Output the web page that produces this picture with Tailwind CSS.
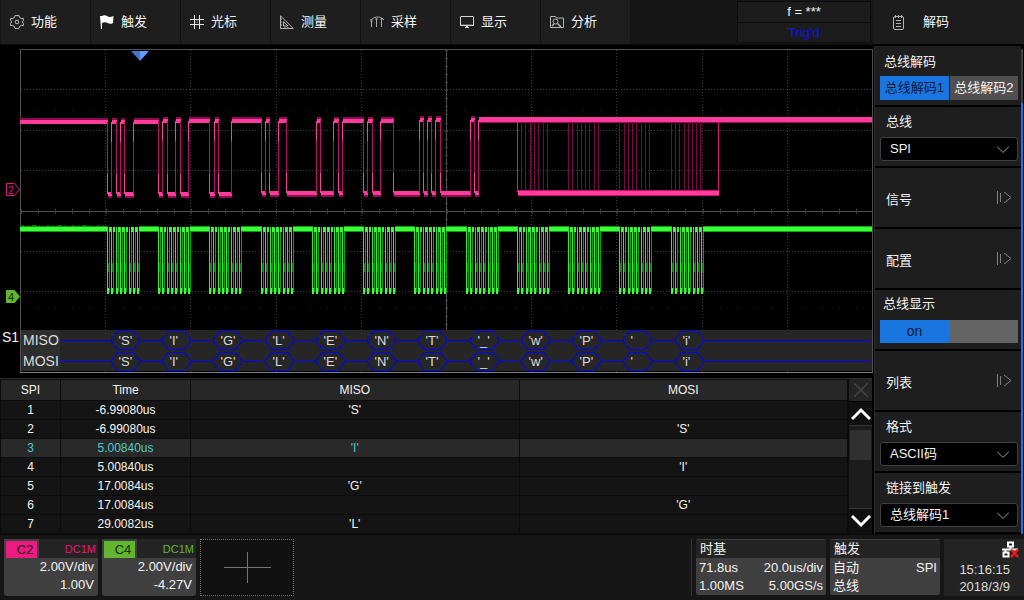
<!DOCTYPE html>
<html lang="zh-CN">
<head>
<meta charset="utf-8">
<title>解码</title>
<script src="https://cdn.jsdelivr.net/npm/@tailwindcss/browser@4"></script>
</head>
<body class="flex min-h-screen flex-col bg-[#161616] font-['Liberation_Sans','Noto_Sans_CJK_SC',sans-serif] text-[13px] leading-[18px] text-[#f4f4f4]">
<div class="flex flex-1 bg-black">
  <main class="flex min-w-0 flex-1 flex-col">
    <header class="flex h-[45px] items-stretch border-b border-[#0c0c0c] bg-[#161616] pl-px">
      <nav class="flex">
        <button class="flex w-[90px] items-center gap-[7px] border-r border-[#121212] bg-[#1e1e1e] pl-[9px]">
          <svg class="size-[14px]" viewBox="0 0 14 14" fill="none" stroke="#c0c0c0"><path d="M5 .6h4l.8 2.200 1.600.8 2-.2v2.200L12.200 7l1.200 1.400v2.200l-2-.2-1.600.8L9 13.400H5l-.8-2.200-1.600-.8-2 .2V8.400L1.800 7 .6 5.600V3.400l2 .2 1.600-.8z"/><circle cx="7" cy="7" r="1.800"/></svg>功能</button>
        <button class="flex w-[90px] items-center gap-[7px] border-r border-[#121212] bg-[#1e1e1e] pl-[9px]">
          <svg class="size-[14px]" viewBox="0 0 14 14" fill="#fff"><path d="M0 1h2v13H1zM2 1c2-1.500 4-.7 5.500.3S11 2 13.500 1L13 8c-2 1.200-4 1-5.500 0S4 7 2 8z"/></svg>触发</button>
        <button class="flex w-[90px] items-center gap-[7px] border-r border-[#121212] bg-[#1e1e1e] pl-[9px]">
          <svg class="size-[14px]" viewBox="0 0 14 14" fill="none" stroke="#e4e4e4"><path d="M4.500 0v14M9.500 0v14M0 4.500h14M0 9.500h14"/><path d="M7 5v4M5 7h4" stroke="#777" stroke-dasharray="1"/></svg>光标</button>
        <button class="flex w-[90px] items-center gap-[7px] border-r border-[#121212] bg-[#1e1e1e] pl-[9px]">
          <svg class="size-[14px]" viewBox="0 0 14 14" fill="none" stroke="#b4b4b4"><path d="M.5.8v12.700h12.800zM3.500 6.500v4.500h4.500z"/><path d="M1 4h1M1 7h1M1 10h1M5 12v1M8 12v1"/></svg>测量</button>
        <button class="flex w-[90px] items-center gap-[7px] border-r border-[#121212] bg-[#1e1e1e] pl-[9px]">
          <svg class="size-[14px]" viewBox="0 0 14 14" fill="none" stroke="#a8a8a8"><path d="M1.500 12V6M6.500 12V4M11.500 12V4"/><path d="M0 5c3 0 3-3 6.500-3S11 2 14 5"/><path d="M.5 6h2M5.500 4h2M10.500 4h2" stroke-width="1.600"/></svg>采样</button>
        <button class="flex w-[90px] items-center gap-[7px] border-r border-[#121212] bg-[#1e1e1e] pl-[9px]">
          <svg class="size-[14px]" viewBox="0 0 14 14" fill="none" stroke="#d4d4d4"><rect x=".5" y="1.500" width="13" height="9" rx=".5"/><path d="M0 10.200h14M6 11.500h2M5 12.500h4"/></svg>显示</button>
        <button class="flex w-[90px] items-center gap-[7px] border-r border-[#121212] bg-[#1e1e1e] pl-[9px]">
          <svg class="size-[14px]" viewBox="0 0 14 14" fill="none" stroke="#b4b4b4"><path d="M.5 12.500v-11h5l1 1.500h7v9.500z"/><circle cx="5.500" cy="6.500" r="2.500"/><path d="M7.500 8.500l3.500 3.500M2 11l2-2" stroke-width="1.500"/></svg>分析</button>
      </nav>
      <div class="mt-px mr-[3px] mb-px ml-auto flex w-[134px] flex-col divide-y divide-[#0c0c0c] border border-[#0c0c0c] bg-[#1c1c1c] text-center">
        <div class="flex-1 leading-5">f = ***</div>
        <div class="flex-1 leading-5 text-[#1010e8]">Trig'd</div>
      </div>
    </header>

    <svg id="scope" class="block h-auto w-full" viewBox="0 45 874 333" role="img" aria-label="SPI">
      <rect y="45" width="874" height="333" fill="#000"/>
      <g id="grid" fill="none" stroke="#3c3c3c" shape-rendering="crispEdges"></g>
      <g id="wave" fill="none" shape-rendering="crispEdges"></g>
      <path d="M131 51h9v10z" fill="#4472c4"/><path d="M140 51h9l-9 10z" fill="#6299fa"/>
      <path d="M6.500 183.500h8l5 6-5 6h-8z" fill="none" stroke="#e5147c"/>
      <path d="M6 290h8.500l5.500 6.500-5.500 6.500H6z" fill="#62b52f"/>
      <text x="8" y="194" font-size="11" fill="#e5147c">2</text>
      <text x="8" y="301" font-size="11" fill="#123000">4</text>
      <g id="decode"></g>
    </svg>

    <section class="mr-[2px] flex flex-1 border-t border-[#2c2c2c] bg-[#141414]">
      <table class="flex-1 table-fixed border-collapse text-center text-[12px]">
        <colgroup><col class="w-[60px]"><col class="w-[130px]"><col><col></colgroup>
        <thead class="bg-[#272727]"><tr class="h-[21px]">
          <th class="border border-[#0c0c0c] p-0 font-normal">SPI</th><th class="border border-[#0c0c0c] p-0 font-normal">Time</th><th class="border border-[#0c0c0c] p-0 font-normal">MISO</th><th class="border border-[#0c0c0c] p-0 font-normal">MOSI</th></tr></thead>
        <tbody id="rows"></tbody>
      </table>
      <div class="flex w-[24px] flex-col border-l border-[#0c0c0c] bg-[#1c1c1c]">
        <button aria-label="关闭" class="flex h-[23px] items-center justify-center border-b border-black bg-[#242424]"><svg class="size-[14px]" viewBox="0 0 14 14" stroke="#484848" stroke-width="1.300"><path d="M0 0l14 14M14 0L0 14"/></svg></button>
        <button aria-label="上" class="flex h-[24px] items-center justify-center border-b border-[#383838] bg-[#101010]"><svg class="h-[14px] w-[20px]" viewBox="0 0 20 14" fill="none" stroke="#fff" stroke-width="3"><path d="M1 12l9-9 9 9"/></svg></button>
        <div class="flex-1 px-px pt-[4px]"><div class="h-[30px] bg-[#303030]"></div></div>
        <button aria-label="下" class="flex h-[26px] items-center justify-center border-t border-[#383838] bg-[#101010]"><svg class="h-[14px] w-[20px]" viewBox="0 0 20 14" fill="none" stroke="#fff" stroke-width="3"><path d="M1 1l9 9 9-9"/></svg></button>
      </div>
    </section>
  </main>

  <aside class="flex w-[150px] flex-col">
    <h1 class="flex h-[44px] items-center gap-[19px] bg-[#1c1c1c] pl-[19px]">
      <svg class="h-[15px] w-[11px]" viewBox="0 0 11 15" fill="none" stroke="#b4b4b4"><rect x=".5" y="1.500" width="10" height="13" rx="1.500"/><path d="M2.500 0v3M5.500 0v3M8.500 0v3M3 5.500h5M3 8.500h5M3 11.500h5"/></svg>解码</h1>
    <div class="mt-[2px] flex flex-1 border-l border-[#2c2c2c]">
      <div class="flex flex-1 flex-col bg-[#1e1e1e]">
        <section class="h-[61px] border-b-2 border-black pt-[7px] pl-[5px]">
          <h2 class="pl-[4px]">总线解码</h2>
          <div class="mt-[5px] mr-[3px] flex h-[24px] gap-px">
            <button class="flex-1 whitespace-nowrap bg-[#1976e0] text-[#0c1c38]">总线解码1</button>
            <button class="flex-1 whitespace-nowrap bg-[#505050]">总线解码2</button>
          </div>
        </section>
        <section class="h-[61px] border-b-2 border-black pt-[6px] pl-[5px]">
          <label for="bus" class="block pl-[6px]">总线</label>
          <div class="relative mt-[6px] mr-[3px]">
            <select id="bus" class="block h-[24px] w-full appearance-none rounded-[3px] border border-[#404040] bg-black pl-[9px]"><option>SPI</option></select>
            <svg class="pointer-events-none absolute top-[9px] right-[9px] h-[7px] w-[12px]" viewBox="0 0 12 7" fill="none" stroke="#a0a0a0"><path d="M0 .5l6 6 6-6"/></svg>
          </div>
        </section>
        <button class="flex h-[61px] items-center justify-between border-b-2 border-black pt-[4px] pr-[9px] pl-[11px]">信号
          <svg class="mb-[4px] h-[13px] w-[16px]" viewBox="0 0 16 13" fill="none" stroke="#808080"><path d="M1.500 0v13M4.500 2v9M8 1l7 5.500L8 12"/></svg></button>
        <button class="flex h-[61px] items-center justify-between border-b-2 border-black pt-[4px] pr-[9px] pl-[11px]">配置
          <svg class="mb-[4px] h-[13px] w-[16px]" viewBox="0 0 16 13" fill="none" stroke="#808080"><path d="M1.500 0v13M4.500 2v9M8 1l7 5.500L8 12"/></svg></button>
        <section class="h-[61px] border-b-2 border-black pt-[5px] pl-[5px]">
          <h2 class="pl-[3px]">总线显示</h2>
          <button role="switch" aria-checked="true" aria-label="总线显示" class="mt-[7px] flex h-[23px] w-[138px] bg-[#646464] text-[14px] leading-[23px] text-[#0c1c38]"><span class="w-1/2 bg-[#1976e0]">on</span></button>
        </section>
        <button class="flex h-[61px] items-center justify-between border-b-2 border-black pt-[4px] pr-[9px] pl-[11px]">列表
          <svg class="mb-[4px] h-[13px] w-[16px]" viewBox="0 0 16 13" fill="none" stroke="#808080"><path d="M1.500 0v13M4.500 2v9M8 1l7 5.500L8 12"/></svg></button>
        <section class="h-[61px] border-b-2 border-black pt-[6px] pl-[5px]">
          <label for="fmt" class="block pl-[6px]">格式</label>
          <div class="relative mt-[6px] mr-[3px]">
            <select id="fmt" class="block h-[24px] w-full appearance-none rounded-[3px] border border-[#404040] bg-black pl-[9px]"><option>ASCII码</option></select>
            <svg class="pointer-events-none absolute top-[9px] right-[9px] h-[7px] w-[12px]" viewBox="0 0 12 7" fill="none" stroke="#a0a0a0"><path d="M0 .5l6 6 6-6"/></svg>
          </div>
        </section>
        <section class="h-[61px] border-b-2 border-black pt-[6px] pl-[5px]">
          <label for="link" class="block pl-[6px]">链接到触发</label>
          <div class="relative mt-[6px] mr-[3px]">
            <select id="link" class="block h-[24px] w-full appearance-none rounded-[3px] border border-[#404040] bg-black pl-[9px]"><option>总线解码1</option></select>
            <svg class="pointer-events-none absolute top-[9px] right-[9px] h-[7px] w-[12px]" viewBox="0 0 12 7" fill="none" stroke="#a0a0a0"><path d="M0 .5l6 6 6-6"/></svg>
          </div>
        </section>
      </div>
      <div class="mr-px flex w-[2px] flex-col pt-[3px]"><div class="h-[54px] bg-[#404040]"></div><div class="flex-1 bg-[#1976e0]"></div></div>
    </div>
  </aside>
</div>

<footer class="flex items-stretch gap-1 border-t border-[#0a0a0a] bg-[#161616] pt-1 pb-1 pl-1">
  <button class="flex w-[94px] flex-col rounded-[3px] bg-[#404040] text-right">
    <span class="flex h-[19px] w-full items-stretch justify-between bg-[#242424] pr-[2px]"><span class="w-[35px] border-2 border-b-0 border-[#404040] bg-[#ec1b80] pl-[7px] text-center text-[#30001c]">C2</span><span class="text-[11px] leading-5 text-[#e5147c]">DC1M</span></span>
    <span class="block w-full pr-[4px] pb-px leading-[18px]">2.00V/div<br>1.00V</span>
  </button>
  <button class="flex w-[94px] flex-col rounded-[3px] bg-[#404040] text-right">
    <span class="flex h-[19px] w-full items-stretch justify-between bg-[#242424] pr-[2px]"><span class="w-[35px] border-2 border-b-0 border-[#404040] bg-[#62b52f] pl-[7px] text-center text-[#123000]">C4</span><span class="text-[11px] leading-5 text-[#62b52f]">DC1M</span></span>
    <span class="block w-full pr-[4px] pb-px leading-[18px]">2.00V/div<br>-4.27V</span>
  </button>
  <button aria-label="+" class="flex w-[94px] items-center justify-center border border-dotted border-[#707070] bg-[#111]"><svg class="h-[31px] w-[47px]" viewBox="0 0 47 31" stroke="#747474"><path d="M23.500 0v31M0 15.500h47"/></svg></button>
  <div class="ml-auto w-px bg-[#333]"></div>
  <button class="h-[56px] w-[130px] rounded-[2px] bg-[#404040] pb-px text-left">
    <span class="block bg-[#242424] px-1">时基</span>
    <span class="flex justify-between px-[3px] pt-px"><span>71.8us</span><span>20.0us/div</span></span>
    <span class="flex justify-between px-[3px] leading-[17px]"><span>1.00MS</span><span>5.00GS/s</span></span>
  </button>
  <button class="h-[56px] w-[110px] rounded-[2px] bg-[#404040] pb-px text-left">
    <span class="block bg-[#242424] px-1">触发</span>
    <span class="flex justify-between px-[3px] pt-px"><span>自动</span><span>SPI</span></span>
    <span class="block px-[3px] leading-[17px]">总线</span>
  </button>
  <div class="w-[80px] self-start bg-[#242424] pb-px text-right text-[#dcdcdc]">
    <svg class="mt-[2px] mr-[5px] ml-auto h-[17px] w-[17px]" viewBox="0 0 17 17" fill="none" stroke="#fff" stroke-width="2"><path d="M6 1.500h5v4H6zM8.500 6v3M0 8.500h16M3.500 9v3M1.500 11.500h5v4h-5z"/><path d="M9 8.500l7 7.500M16 8.500L9 16" stroke="#f01414" stroke-width="2.500"/></svg>
    <time class="block pr-[14px] pt-[3px] leading-[17px]">15:16:15<br>2018/3/9</time>
  </div>
</footer>

<script>
// Graticule: 10 columns, dotted divisions, solid centre axes with ticks
const xs = [105.5, 190.5, 276.5, 361.5, 531.5, 616.5, 702.5, 787.5];
const ys = [89.5, 130.5, 170.5, 251.5, 291.5];
let g = '';
xs.forEach(x => g += `<path d="M${x} 50V372" stroke-dasharray="1 2"/>`);
ys.forEach(y => g += `<path d="M21 ${y}H872" stroke-dasharray="1 2"/>`);
g += '<path d="M20.5 372V49.5H872.5V372M21 211.5H872M446.5 50V330" stroke="#505050"/>';
g += '<path d="M20.5 211.5H872" stroke-width="5" stroke-dasharray="1 16.05"/>';
g += '<path d="M446.5 50V330" stroke-width="3" stroke-dasharray="1 7.06"/>';
g += '<path d="M20.5 110.5H872M20.5 307.5H872" stroke="#242424" stroke-dasharray="1 16.05"/>';
document.getElementById('grid').innerHTML = g;

// Channel 2 level changes; the trace starts high and toggles at each position
const edges = [108,112,117,121,125,134,159,163,168,176,181,189,210,215,219,232,262,266,270,279,287,317,321,334,339,343,364,368,373,381,394,420,424,428,432,436,441,471,475,479];
let w = '', from = 20, high = true;
const hi = x => x < 150 ? 122 : x < 400 ? 121 : 120;
const lo = x => x < 250 ? 194 : 193;
edges.forEach(x => {
  const y = high ? hi(from) : lo(from);
  const n = high ? -1 : 1;
  w += `<path d="M${from} ${y + n}H${x}" stroke="#8c0c50" stroke-width="6"/><path d="M${from} ${y}H${x}" stroke="#ff3c9c" stroke-width="4"/>`;
  w += `<path d="M${x - .5} ${hi(x)}V${lo(x)}" stroke="#b8106a"/>`;
  w += high ? `<path d="M${x - .5} ${lo(x) - 20}v20" stroke="#ff3c9c"/>` : `<path d="M${x - .5} ${hi(x)}v20" stroke="#ff3c9c"/>`;
  from = x; high = !high;
});
w += '<path d="M479 120H872" stroke="#a00c58" stroke-width="6"/><path d="M479 119.5H872" stroke="#ff3c9c" stroke-width="5"/>';
[517,521,525,530,534,538,543,547,568,572,577,581,585,589,594,598,619,624,628,632,636,641,645,649,671,675,679,684,688,692,696,700,718]
  .forEach(x => w += `<path d="M${x + .5} 122V192" stroke="${x === 517 || x === 718 ? '#d81878' : '#780844'}"/>`);
w += '<path d="M518 193H719" stroke="#c8106c" stroke-width="6"/><path d="M518 192.5H719" stroke="#ff3c9c" stroke-width="4"/>';

// Channel 4: twelve bursts of eight clock pulses
const bursts = [107,158,209,261,312,363,414,466,517,568,619,671];
let left = 20;
bursts.forEach(b => {
  w += `<path d="M${left} 229H${b + 1}" stroke="#0c9c0c" stroke-width="6"/><path d="M${left} 229H${b + 1}" stroke="#3cff3c" stroke-width="4"/>`;
  for (let i = 0; i < 8; i++) {
    const x = b + Math.round(i * 4.3);
    w += `<path d="M${x + .5} 227V291" stroke="#2cf02c"/><path d="M${x + 1} 288V294" stroke="#3cff3c" stroke-width="2"/>`;
    w += `<path d="M${x + 2.5} 228V292" stroke="#0ca40c"/><path d="M${x + 1.5} 263V272" stroke="#0a7c0a"/>`;
    if (i < 7) w += `<path d="M${x + 2} 229h2" stroke="#3cff3c" stroke-width="5"/>`;
  }
  left = b + 32;
});
w += '<path d="M703 229H872" stroke="#0cac0c" stroke-width="6"/><path d="M703 229H872" stroke="#3cff3c" stroke-width="4"/>';
w += '<path d="M22 225.5H106" stroke="#086808" stroke-dasharray="2 4 1 3 5 2 1 7"/>';
document.getElementById('wave').innerHTML = w;

// Decoded bus lanes
const words = ["'S'","'I'","'G'","'L'","'E'","'N'","'T'","'_'","'w'","'P'","'","'i'"];
let d = '<rect x="21" y="330" width="851" height="41" fill="#262626"/><rect x="21" y="330" width="39" height="41" fill="#2e2e2e"/><path d="M20 372.5H873" stroke="#808080"/>';
[['MISO', 340.5], ['MOSI', 361.5]].forEach(([name, y]) => {
  let p = 60;
  d += `<text x="23" y="${y + 4.5}" font-size="14" fill="#dcdcdc">${name}</text>`;
  bursts.forEach((b, i) => {
    const x = b + 3.5;
    d += `<path d="M${p} ${y}H${x}l7 -9h16l7 9l-7 9h-16l-7 -9" fill="none" stroke="#0000ff" shape-rendering="crispEdges"/>`;
    d += `<text x="${x + 8}" y="${y + 4.5}" font-size="13" fill="#dcdcdc">${words[i]}</text>`;
    p = x + 30;
  });
  d += `<path d="M${p} ${y}H872" stroke="#0000ff" shape-rendering="crispEdges"/>`;
});
d += '<text x="2" y="342" font-size="14" fill="#f4f4f4">S1</text>';
document.getElementById('decode').innerHTML = d;

// Decode list
const list = [['-6.99080us',"'S'",''],['-6.99080us','',"'S'"],['5.00840us',"'I'",''],['5.00840us','',"'I'"],['17.0084us',"'G'",''],['17.0084us','',"'G'"],['29.0082us',"'L'",'']];
document.getElementById('rows').innerHTML = list.map((r, i) =>
  `<tr class="h-[19px] ${i === 2 ? 'bg-[#292929] text-[#52c8c8]' : ''}">` + [i + 1, ...r].map(c => `<td class="border border-[#0c0c0c] p-0 leading-[18px]">${c}</td>`).join('') + '</tr>').join('');
</script>
</body>
</html>
